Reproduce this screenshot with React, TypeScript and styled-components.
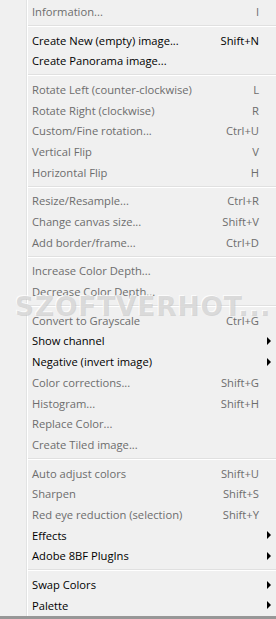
import React from "react";
import styled, { createGlobalStyle } from "styled-components";

const Global = createGlobalStyle`
  html, body { margin: 0; padding: 0; background: #f0f0f0; }
  body { width: 276px; height: 619px; overflow: hidden; }
`;

type Item =
  | { kind: "item"; label: string; shortcut?: string; enabled?: boolean; sub?: boolean }
  | { kind: "sep" };

const items: Item[] = [
  { kind: "item", label: "Information...", shortcut: "I" },
  { kind: "sep" },
  { kind: "item", label: "Create New (empty) image...", shortcut: "Shift+N", enabled: true },
  { kind: "item", label: "Create Panorama image...", enabled: true },
  { kind: "sep" },
  { kind: "item", label: "Rotate Left (counter-clockwise)", shortcut: "L" },
  { kind: "item", label: "Rotate Right (clockwise)", shortcut: "R" },
  { kind: "item", label: "Custom/Fine rotation...", shortcut: "Ctrl+U" },
  { kind: "item", label: "Vertical Flip", shortcut: "V" },
  { kind: "item", label: "Horizontal Flip", shortcut: "H" },
  { kind: "sep" },
  { kind: "item", label: "Resize/Resample...", shortcut: "Ctrl+R" },
  { kind: "item", label: "Change canvas size...", shortcut: "Shift+V" },
  { kind: "item", label: "Add border/frame...", shortcut: "Ctrl+D" },
  { kind: "sep" },
  { kind: "item", label: "Increase Color Depth..." },
  { kind: "item", label: "Decrease Color Depth..." },
  { kind: "sep" },
  { kind: "item", label: "Convert to Grayscale", shortcut: "Ctrl+G" },
  { kind: "item", label: "Show channel", enabled: true, sub: true },
  { kind: "item", label: "Negative (invert image)", enabled: true, sub: true },
  { kind: "item", label: "Color corrections...", shortcut: "Shift+G" },
  { kind: "item", label: "Histogram...", shortcut: "Shift+H" },
  { kind: "item", label: "Replace Color..." },
  { kind: "item", label: "Create Tiled image..." },
  { kind: "sep" },
  { kind: "item", label: "Auto adjust colors", shortcut: "Shift+U" },
  { kind: "item", label: "Sharpen", shortcut: "Shift+S" },
  { kind: "item", label: "Red eye reduction (selection)", shortcut: "Shift+Y" },
  { kind: "item", label: "Effects", enabled: true, sub: true },
  { kind: "item", label: "Adobe 8BF PlugIns", enabled: true, sub: true },
  { kind: "sep" },
  { kind: "item", label: "Swap Colors", enabled: true, sub: true },
  { kind: "item", label: "Palette", enabled: true, sub: true },
];

const Menu = styled.div`
  position: relative;
  width: 276px;
  height: 619px;
  box-sizing: border-box;
  background: #f0f0f0;
  border-bottom: 3px solid #979797;
  padding-top: 1px;
  font-family: "Open Sans", "Noto Sans", sans-serif;
  font-size: 11.2px;
  overflow: hidden;
`;

const Gutter = styled.div`
  position: absolute;
  top: 0;
  bottom: 0;
  left: 26px;
  width: 1px;
  background: #e2e3e3;
  border-right: 1px solid #ffffff;
`;

const Row = styled.div<{ $enabled?: boolean }>`
  position: relative;
  display: flex;
  align-items: center;
  height: 20.7px;
  padding-left: 32px;
  padding-right: 17px;
  color: ${(p) => (p.$enabled ? "#000000" : "#6d6d6d")};
`;

const Label = styled.span`
  flex: 1;
  white-space: nowrap;
`;

const Shortcut = styled.span`
  white-space: nowrap;
`;

const Arrow = styled.span`
  position: absolute;
  right: 5px;
  top: 50%;
  margin-top: -4px;
  width: 0;
  height: 0;
  border-top: 4px solid transparent;
  border-bottom: 4px solid transparent;
  border-left: 4px solid #000;
`;

const Sep = styled.div`
  height: 8px;
  display: flex;
  align-items: center;
  padding-left: 28px;
  &::after {
    content: "";
    flex: 1;
    height: 1px;
    background: #e0e0e0;
    border-bottom: 1px solid #ffffff;
  }
`;

const Watermark = styled.div`
  position: absolute;
  left: 15px;
  top: 294px;
  font-family: "DejaVu Sans", "Liberation Sans", sans-serif;
  font-weight: bold;
  font-size: 26.5px;
  line-height: 1;
  letter-spacing: 0.8px;
  color: rgba(190, 190, 190, 0.55);
  text-shadow: -1px -1px 0 rgba(255, 255, 255, 0.8);
  pointer-events: none;
  white-space: nowrap;
`;

export default function App() {
  return (
    <>
      <Global />
      <Menu>
        <Gutter />
        {items.map((it, i) =>
          it.kind === "sep" ? (
            <Sep key={i} />
          ) : (
            <Row key={i} $enabled={it.enabled}>
              <Label>{it.label}</Label>
              {it.shortcut && <Shortcut>{it.shortcut}</Shortcut>}
              {it.sub && <Arrow />}
            </Row>
          )
        )}
        <Watermark>SZOFTVERHOT...</Watermark>
      </Menu>
    </>
  );
}
